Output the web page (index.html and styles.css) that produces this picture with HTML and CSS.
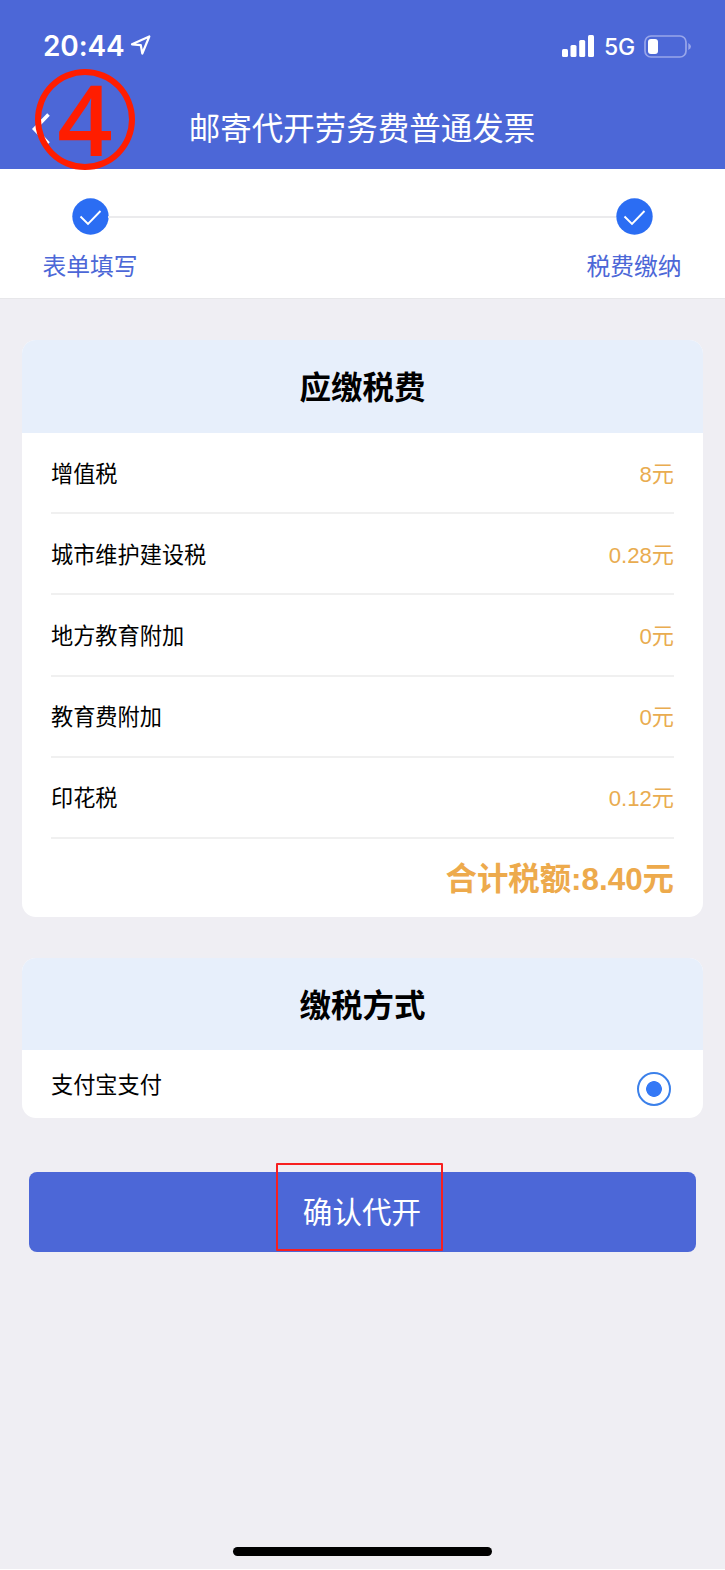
FILE: index.html
```html
<!DOCTYPE html>
<html lang="zh-CN">
<head>
    <meta charset="UTF-8">
    <meta name="viewport" content="width=device-width, initial-scale=1.0">
    <title>邮寄代开劳务费普通发票</title>
    <link rel="stylesheet" href="styles.css">
</head>
<body>

    <header class="header">
        <div class="status-bar">
            <div class="status-left">
                <span class="time">20:44</span>
                <svg class="location" width="22" height="22" viewBox="0 0 22 22">
                    <path d="M2 10.3 L19.3 2.5 L12.3 19.5 L10.8 11.2 Z" fill="none" stroke="#fff" stroke-width="2.2" stroke-linejoin="round"/>
                </svg>
            </div>
            <div class="status-right">
                <svg width="32" height="22" viewBox="0 0 32 22" fill="#fff">
                    <rect x="0" y="14" width="6" height="8" rx="1.5"/>
                    <rect x="8.5" y="10" width="6" height="12" rx="1.5"/>
                    <rect x="17.2" y="5" width="6" height="17" rx="1.5"/>
                    <rect x="26" y="0" width="6" height="22" rx="1.5"/>
                </svg>
                <span class="network">5G</span>
                <svg class="battery" width="48" height="23" viewBox="0 0 48 23">
                    <rect x="1" y="1" width="41" height="21" rx="6" fill="none" stroke="#98a6ea" stroke-width="1.7"/>
                    <rect x="4" y="4" width="10" height="15" rx="3" fill="#fff"/>
                    <path d="M44.3 8 Q47 9.5 47 11.5 Q47 13.5 44.3 15 Z" fill="#98a6ea"/>
                </svg>
            </div>
        </div>
        <div class="nav-bar">
            <svg class="back" width="20" height="34" viewBox="0 0 20 34">
                <path d="M17.5 2.5 L3.5 17 L17.5 31.5" fill="none" stroke="#fff" stroke-width="3.6"/>
            </svg>
            <h1>邮寄代开劳务费普通发票</h1>
        </div>
        <div class="mark-number">4</div>
    </header>

    <div class="steps">
        <div class="step">
            <svg width="37" height="37" viewBox="0 0 37 37">
                <circle cx="18.5" cy="18.5" r="18.2" fill="#2b6df3"/>
                <path d="M8.5 18.5 L16 26 L28.5 13" fill="none" stroke="#fff" stroke-width="1.9"/>
            </svg>
            <span>表单填写</span>
        </div>
        <div class="step-line"></div>
        <div class="step">
            <svg width="37" height="37" viewBox="0 0 37 37">
                <circle cx="18.5" cy="18.5" r="18.2" fill="#2b6df3"/>
                <path d="M8.5 18.5 L16 26 L28.5 13" fill="none" stroke="#fff" stroke-width="1.9"/>
            </svg>
            <span>税费缴纳</span>
        </div>
    </div>

    <main>
        <section class="card">
            <h2>应缴税费</h2>
            <ul class="tax-list">
                <li><span>增值税</span><span class="amount">8元</span></li>
                <li><span>城市维护建设税</span><span class="amount">0.28元</span></li>
                <li><span>地方教育附加</span><span class="amount">0元</span></li>
                <li><span>教育费附加</span><span class="amount">0元</span></li>
                <li><span>印花税</span><span class="amount">0.12元</span></li>
            </ul>
            <div class="total">合计税额:8.40元</div>
        </section>

        <section class="card pay-card">
            <h2>缴税方式</h2>
            <label class="pay-item">
                <span>支付宝支付</span>
                <input type="radio" name="pay" checked>
            </label>
        </section>

        <button class="submit"><span>确认代开</span></button>
    </main>

    <div class="home-indicator"></div>

</body>
</html>
```

FILE: styles.css
```css
* {
    box-sizing: border-box;
}
html {
    background: #fff;
}
body {
    margin: 0;
    height: 1569px;
    display: flex;
    flex-direction: column;
    background: #efeef3;
    color: #000;
    font-family: "Liberation Sans", "Noto Sans CJK SC", sans-serif;
}
h1, h2, ul {
    margin: 0;
    padding: 0;
}

/* header */
.header {
    position: relative;
    height: 169px;
    flex-shrink: 0;
    background: #4c67d7;
    color: #fff;
}
.status-bar {
    height: 88px;
    padding: 4px 33px 0 43px;
    display: flex;
    justify-content: space-between;
    align-items: center;
    font-family: Inter, sans-serif;
}
.status-left, .status-right {
    display: flex;
    align-items: center;
}
.time {
    width: 82px;
    font-size: 28px;
    font-weight: 600;
    letter-spacing: -0.1px;
    white-space: nowrap;
}
.location {
    margin: -2px 0 0 5px;
}
.network {
    width: 30px;
    margin: 1px 10px 0 10px;
    font-size: 23px;
    font-weight: 500;
    letter-spacing: -0.3px;
}
.nav-bar {
    height: 81px;
    padding-left: 31px;
    display: flex;
    align-items: center;
}
.back {
    flex-shrink: 0;
}
.nav-bar h1 {
    flex: 1;
    padding: 0 52px 6px 0;
    text-align: center;
    font-size: 31.5px;
    font-weight: 400;
}
/* red number badge over the back arrow */
.mark-number {
    position: absolute;
    left: 35px;
    top: 69px;
    width: 100px;
    height: 101px;
    border: 6px solid #ff1d00;
    border-radius: 50%;
    color: #ff1d00;
    font-family: "Open Sans", sans-serif;
    font-size: 97px;
    font-weight: 600;
    line-height: 86px;
    text-align: center;
    z-index: 1;
}

/* steps */
.steps {
    height: 130px;
    flex-shrink: 0;
    padding: 29px 43px 0 42px;
    display: flex;
    justify-content: space-between;
    background: #fff;
    border-bottom: 1px solid #e7e7ea;
}
.step {
    width: 96px;
    display: flex;
    flex-direction: column;
    align-items: center;
    color: #4c67d7;
    font-size: 23.8px;
    line-height: 36px;
}
.step span {
    margin-top: 14px;
    white-space: nowrap;
}
.step-line {
    flex: 1;
    height: 2px;
    margin: 18px -30px 0;
    background: #ebebed;
}

/* cards */
main {
    padding: 41px 22px 0;
}
.card {
    margin-bottom: 41px;
    background: #fff;
    border-radius: 14px;
    overflow: hidden;
}
.card h2 {
    height: 93px;
    line-height: 96px;
    background: #e7effb;
    text-align: center;
    font-size: 31.5px;
    font-weight: bold;
}
.tax-list {
    padding: 0 29px;
    list-style: none;
}
.tax-list li {
    height: 81.2px;
    padding-bottom: 2px;
    display: flex;
    justify-content: space-between;
    align-items: center;
    border-bottom: 2px solid #f0f0f0;
    font-size: 22.2px;
}
.amount {
    color: #e9ac50;
}
.total {
    height: 78px;
    padding-right: 29px;
    line-height: 82px;
    text-align: right;
    color: #edaa4c;
    font-size: 31.4px;
    font-weight: bold;
}
.pay-card {
    margin-bottom: 54px;
}
.pay-card h2 {
    height: 92px;
}
.pay-item {
    height: 68px;
    padding: 0 32px 0 29px;
    display: flex;
    justify-content: space-between;
    align-items: center;
    font-size: 22.2px;
}
.pay-item span {
    margin-top: -2px;
}
.pay-item input {
    appearance: none;
    width: 34px;
    height: 34px;
    margin: 11px 0 0;
    border: 2px solid #3b80ea;
    border-radius: 50%;
    background: radial-gradient(circle, #3579f6 7.5px, #fff 8.2px);
}

/* confirm button */
.submit {
    width: 667px;
    height: 80px;
    margin: 0 7px;
    padding: 0;
    display: flex;
    justify-content: center;
    border: none;
    border-radius: 8px;
    background: #4c67d7;
    color: #fff;
    font-family: inherit;
    font-size: 29.6px;
}
.submit span {
    width: 167px;
    height: 88px;
    margin: -9px 0 0 -6px;
    padding-left: 5px;
    border: 2px solid #f71f1f;
    border-radius: 1px;
    line-height: 95px;
}

.home-indicator {
    width: 259px;
    height: 9px;
    margin: auto auto 13px;
    border-radius: 5px;
    background: #000;
}
```
